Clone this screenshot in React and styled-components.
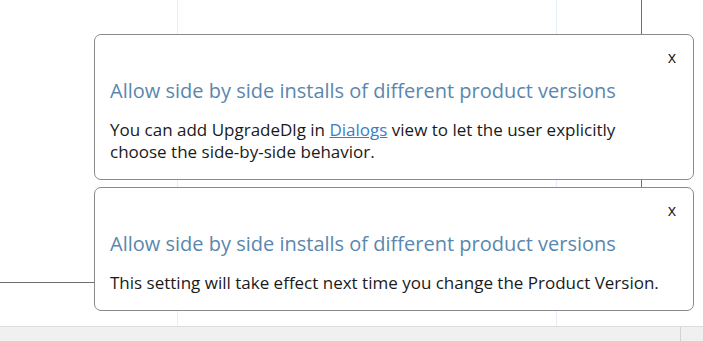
import React from 'react'
import styled, { createGlobalStyle } from 'styled-components'

const GlobalStyle = createGlobalStyle`
  html, body {
    margin: 0;
    padding: 0;
    background: #ffffff;
  }
  body {
    font-family: 'Open Sans', 'Noto Sans', sans-serif;
    color: #1a1a1a;
  }
`

const Page = styled.div`
  width: 703px;
  height: 341px;
  display: flex;
  flex-direction: column;
  overflow: hidden;
`

const Canvas = styled.div`
  position: relative;
  flex: 1;
  background:
    linear-gradient(#e4eef8, #e4eef8) 177px 0 / 1px 100% no-repeat,
    linear-gradient(#e4eef8, #e4eef8) 556px 0 / 1px 100% no-repeat,
    #ffffff;
`

const VLine = styled.div`
  position: absolute;
  left: ${p => p.x}px;
  top: 0;
  width: 1px;
  height: ${p => p.len}px;
  background: #6e6e6e;
`

const HLine = styled.div`
  position: absolute;
  left: 0;
  top: ${p => p.y}px;
  width: ${p => p.len}px;
  height: 1px;
  background: #6e6e6e;
`

const Stack = styled.div`
  position: absolute;
  top: 34px;
  left: 94px;
  width: 600px;
  display: flex;
  flex-direction: column;
  gap: 7px;
`

const Toast = styled.div`
  box-sizing: border-box;
  border: 1px solid #8a8a8a;
  border-radius: 7px;
  background: #ffffff;
  padding: 10px 17px 16px 15px;
`

const CloseRow = styled.div`
  display: flex;
  justify-content: flex-end;
`

const Close = styled.button`
  border: none;
  background: none;
  padding: 0;
  font: inherit;
  font-size: 16px;
  line-height: 24px;
  color: #1a1a1a;
  cursor: pointer;
`

const Title = styled.h3`
  margin: 8px 0 0;
  font-size: 20px;
  font-weight: 400;
  line-height: 28px;
  color: #5a87ad;
`

const Body = styled.p`
  margin: 14px 0 0;
  max-width: 556px;
  font-size: 17px;
  line-height: 22px;
  color: #1a1a1a;
`

const Link = styled.a`
  color: #3b7dc4;
  text-decoration: underline;
`

const StatusBar = styled.div`
  height: 14px;
  border-top: 1px solid #dcdcdc;
  background: #f0f0f0;
  display: flex;
`

const StatusCell = styled.div`
  width: ${p => p.w}px;
  border-right: 1px solid #d2d2d2;
`

const Notice = ({ children }) => (
  <Toast>
    <CloseRow>
      <Close>x</Close>
    </CloseRow>
    <Title>Allow side by side installs of different product versions</Title>
    <Body>{children}</Body>
  </Toast>
)

const App = () => {
  return (
    <Page>
      <GlobalStyle />
      <Canvas>
        <VLine x={641} len={187} />
        <HLine y={282} len={94} />
        <Stack>
          <Notice>
            You can add UpgradeDlg in <Link href="#">Dialogs</Link> view to let
            the user explicitly choose the side-by-side behavior.
          </Notice>
          <Notice>
            This setting will take effect next time you change the Product
            Version.
          </Notice>
        </Stack>
      </Canvas>
      <StatusBar>
        <StatusCell w={680} />
      </StatusBar>
    </Page>
  )
}

export default App
